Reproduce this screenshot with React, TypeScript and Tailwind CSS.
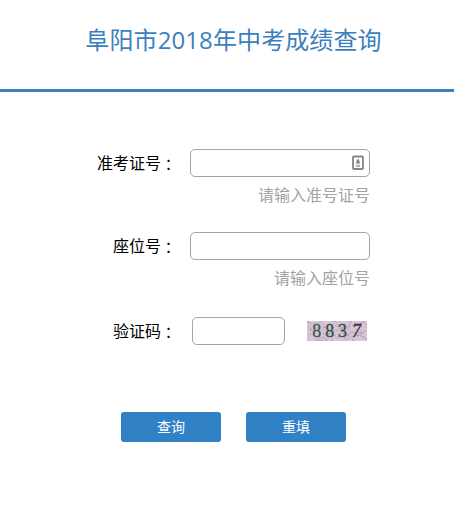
import type { ReactNode } from "react";

const cjk = "font-['Open_Sans','Noto_Sans_CJK_SC',sans-serif]";

function Label({ children }: { children: ReactNode }) {
  return (
    <label className="flex h-7 w-[177px] shrink-0 items-center justify-end text-[16px] leading-7 text-black">
      {children}
      <span className="w-4 pt-[2px] text-[15px] font-['Noto_Sans_CJK_TC',sans-serif]">：</span>
    </label>
  );
}

function CardIcon() {
  return (
    <svg width="12" height="16" viewBox="0 0 12 16" fill="none">
      <rect x="1" y="1.5" width="10" height="12.5" rx="1" stroke="#858585" strokeWidth="1.8" />
      <path d="M6 3.5 7.2 5.5 8 8.5H4L4.8 5.5Z" fill="#808080" />
      <path d="M3.8 10.2h4.4M3.8 11.4h4.4" stroke="#a5a5a5" strokeWidth="1" />
    </svg>
  );
}

const specks = Array.from({ length: 190 }, (_, i) => ({
  x: (i * 37 + ((i * i) % 11)) % 60,
  y: (i * 13 + ((i * i) % 7)) % 20,
  c: ["#c39bc0", "#e3c5dc", "#b5b0c0", "#f0dfec", "#c3ccc4", "#d2a8c3"][(i * 5 + (i % 4)) % 6],
}));

function Captcha() {
  return (
    <svg width="60" height="20" viewBox="0 0 60 20" className="ml-[22px] mt-1">
      <rect width="60" height="20" fill="#dac6d8" />
      {specks.map((s, i) => (
        <path key={i} d={`M${s.x} ${s.y}l2 1`} stroke={s.c} strokeWidth="1" />
      ))}
      <path d="M0 7 16 0M8 20 33 7M29 3 58 17M36 20 60 9M1 13 20 18" stroke="#bcacc0" strokeWidth=".7" />
      <g className="font-['Liberation_Serif',serif]" fontSize="18" strokeWidth=".35">
        <text x="5.2" y="16" fill="#42604d" stroke="#42604d">8</text>
        <text x="18.2" y="16" fill="#365343" stroke="#365343">8</text>
        <text x="31" y="16" fill="#35504a" stroke="#35504a">3</text>
        <text x="45" y="16" fill="#373047" stroke="#373047" fontStyle="italic">7</text>
      </g>
    </svg>
  );
}

export default function App() {
  return (
    <main className={`h-[512px] w-[454px] overflow-hidden bg-white ${cjk}`}>
      <header className="h-[92px] border-b-[3px] border-[#3d80bd] pl-[13px] pt-[22px]">
        <h1 className="text-center text-[24px] leading-9 tracking-[0.1px] text-[#3b7fbe]">阜阳市2018年中考成绩查询</h1>
      </header>
      <form className="pt-[57px]" onSubmit={(e) => e.preventDefault()}>
        <div className="flex h-[83px]">
          <Label>准考证号</Label>
          <div className="ml-[13px] w-[180px]">
            <div className="flex h-7 items-center justify-end rounded-[5px] border border-[#a5a5a5] pr-[5px]">
              <input className="min-w-0 flex-1 outline-none" />
              <CardIcon />
            </div>
            <p className="mt-[6px] text-right text-[16px] leading-6 text-[#a3a3a3]">请输入准号证号</p>
          </div>
        </div>
        <div className="flex h-[85px]">
          <Label>座位号</Label>
          <div className="ml-[13px] w-[180px]">
            <input className="block h-7 w-full rounded-[5px] border border-[#a5a5a5] outline-none" />
            <p className="mt-[6px] text-right text-[16px] leading-6 text-[#a3a3a3]">请输入座位号</p>
          </div>
        </div>
        <div className="flex h-[95px]">
          <Label>验证码</Label>
          <input className="ml-[15px] h-7 w-[93px] rounded-[5px] border border-[#a5a5a5] outline-none" />
          <Captcha />
        </div>
        <div className="flex gap-[25px] pl-[121px]">
          <button className="h-[30px] w-[100px] rounded-[3px] bg-[#3181c6] text-[14px] leading-[30px] text-white">查询</button>
          <button className="h-[30px] w-[100px] rounded-[3px] bg-[#3181c6] text-[14px] leading-[30px] text-white">重填</button>
        </div>
      </form>
    </main>
  );
}
